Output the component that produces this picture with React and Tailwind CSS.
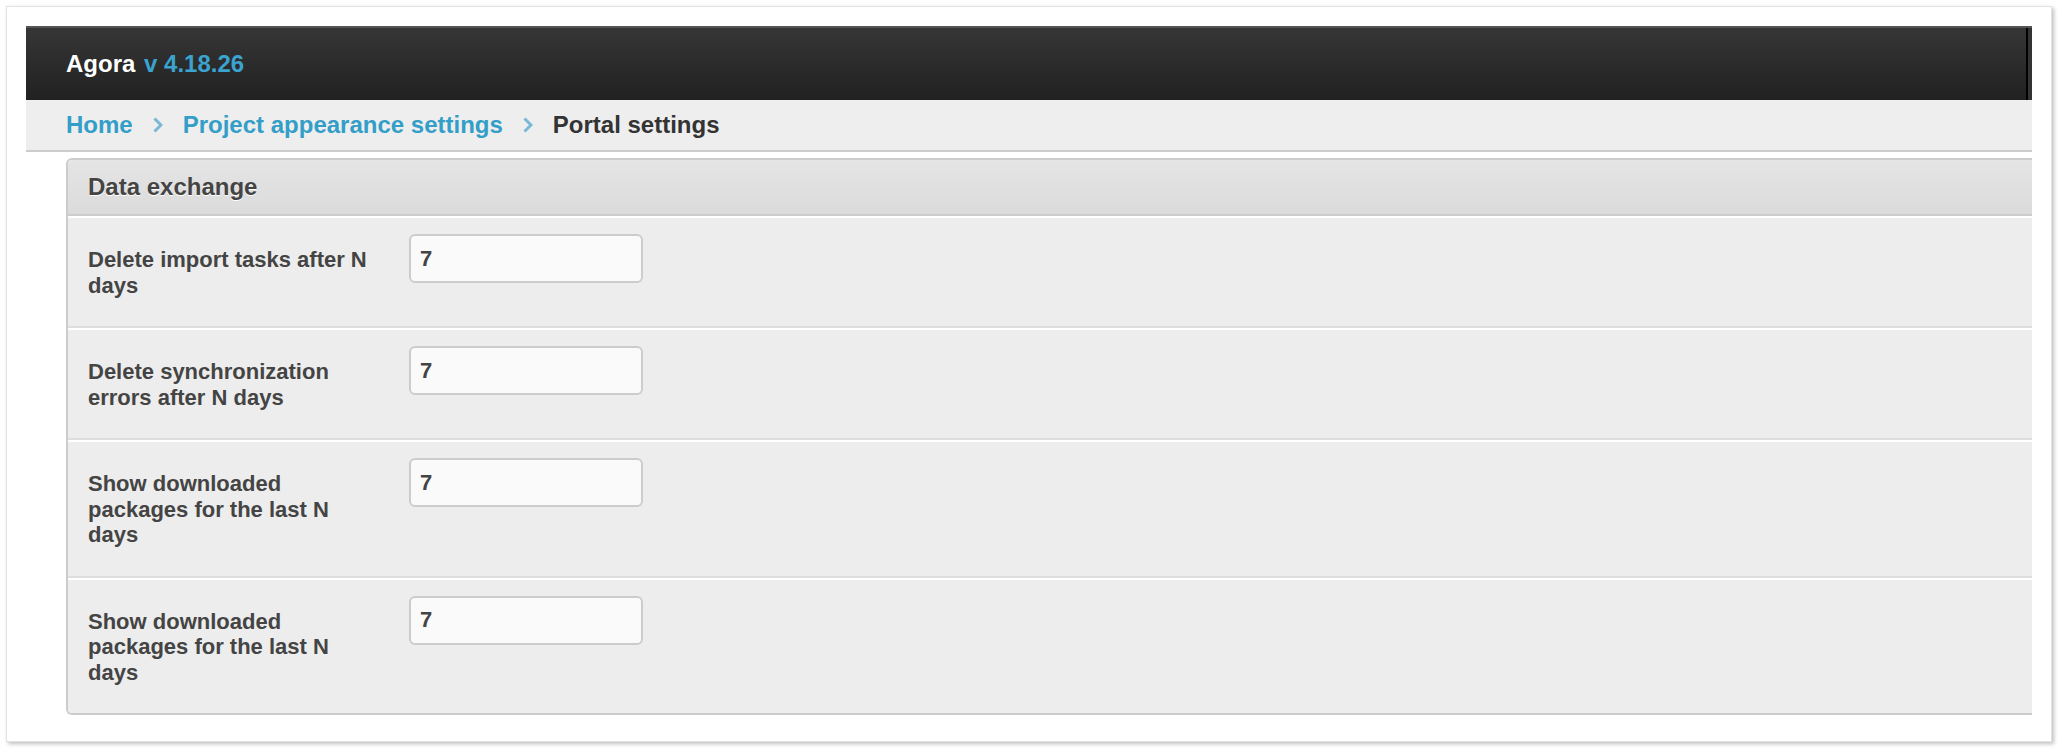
import React from "react";

const rows = [
  { label: "Delete import tasks after N days", value: "7" },
  { label: "Delete synchronization errors after N days", value: "7" },
  { label: "Show downloaded packages for the last N days", value: "7" },
  { label: "Show downloaded packages for the last N days", value: "7" },
];

const Chevron = () => (
  <svg width="10" height="16" viewBox="0 0 10 16" className="shrink-0">
    <polyline points="1.5,1.5 8,8 1.5,14.5" fill="none" stroke="#7ab9d6" strokeWidth="3" />
  </svg>
);

const PortalSettings = () => {
  return (
    <div
      className="w-full h-[748px] bg-white p-[6px] flex"
      style={{ fontFamily: '"Liberation Sans", Arial, sans-serif' }}
    >
      <div className="flex-1 h-[736px] bg-white border border-[#e2e2e2] shadow-[2px_2px_4px_rgba(0,0,0,0.25)] px-[19px] pt-[19px]">
        <div className="w-full overflow-hidden">
          {/* Top bar */}
          <div className="h-[74px] flex items-center border-t-2 border-[#555] bg-gradient-to-b from-[#363636] to-[#212121]">
            <div className="pl-[40px] text-[24px] font-bold text-white leading-none">
              Agora <span className="text-[#3aa3cf] ml-[2px]">v 4.18.26</span>
            </div>
            <div className="ml-auto flex h-full">
              <div className="w-[2px] bg-black" />
              <div className="w-[4px] bg-[#333]" />
            </div>
          </div>

          {/* Breadcrumbs */}
          <div className="h-[52px] bg-[#eeeeee] border-b-2 border-[#cccccc] flex items-center pl-[40px] gap-[20px] text-[24px] font-bold">
            <span className="text-[#339ec8]">Home</span>
            <Chevron />
            <span className="text-[#339ec8]">Project appearance settings</span>
            <Chevron />
            <span className="text-[#333]">Portal settings</span>
          </div>

          {/* Panel */}
          <div className="ml-[40px] mt-[6px] border-2 border-r-0 border-[#cccccc] rounded-l-[6px] overflow-hidden">
            <div className="h-[56px] flex items-center pl-[20px] border-b-2 border-[#cccccc] bg-gradient-to-b from-[#e5e5e5] to-[#dbdbdb]">
              <h2 className="text-[24px] font-bold text-[#444] [text-shadow:0_1px_0_#fff]">Data exchange</h2>
            </div>
            {rows.map((row, i) => (
              <div
                key={i}
                className={`flex items-start bg-[#ededed] border-t-2 border-white ${
                  i < rows.length - 1 ? "border-b-2 border-b-[#dddddd]" : ""
                }`}
              >
                <label className="w-[312px] pl-[20px] pt-[29px] pb-[28px] text-[22px] leading-[25.5px] font-bold text-[#444]">
                  {row.label}
                </label>
                <input
                  type="text"
                  readOnly
                  value={row.value}
                  className="mt-[16px] ml-[29px] w-[234px] h-[49px] border-2 border-[#cccccc] rounded-[6px] bg-[#fafafa] pl-[9px] text-[22px] font-bold text-[#444] outline-none"
                />
              </div>
            ))}
          </div>
        </div>
      </div>
    </div>
  );
};

export default PortalSettings;
